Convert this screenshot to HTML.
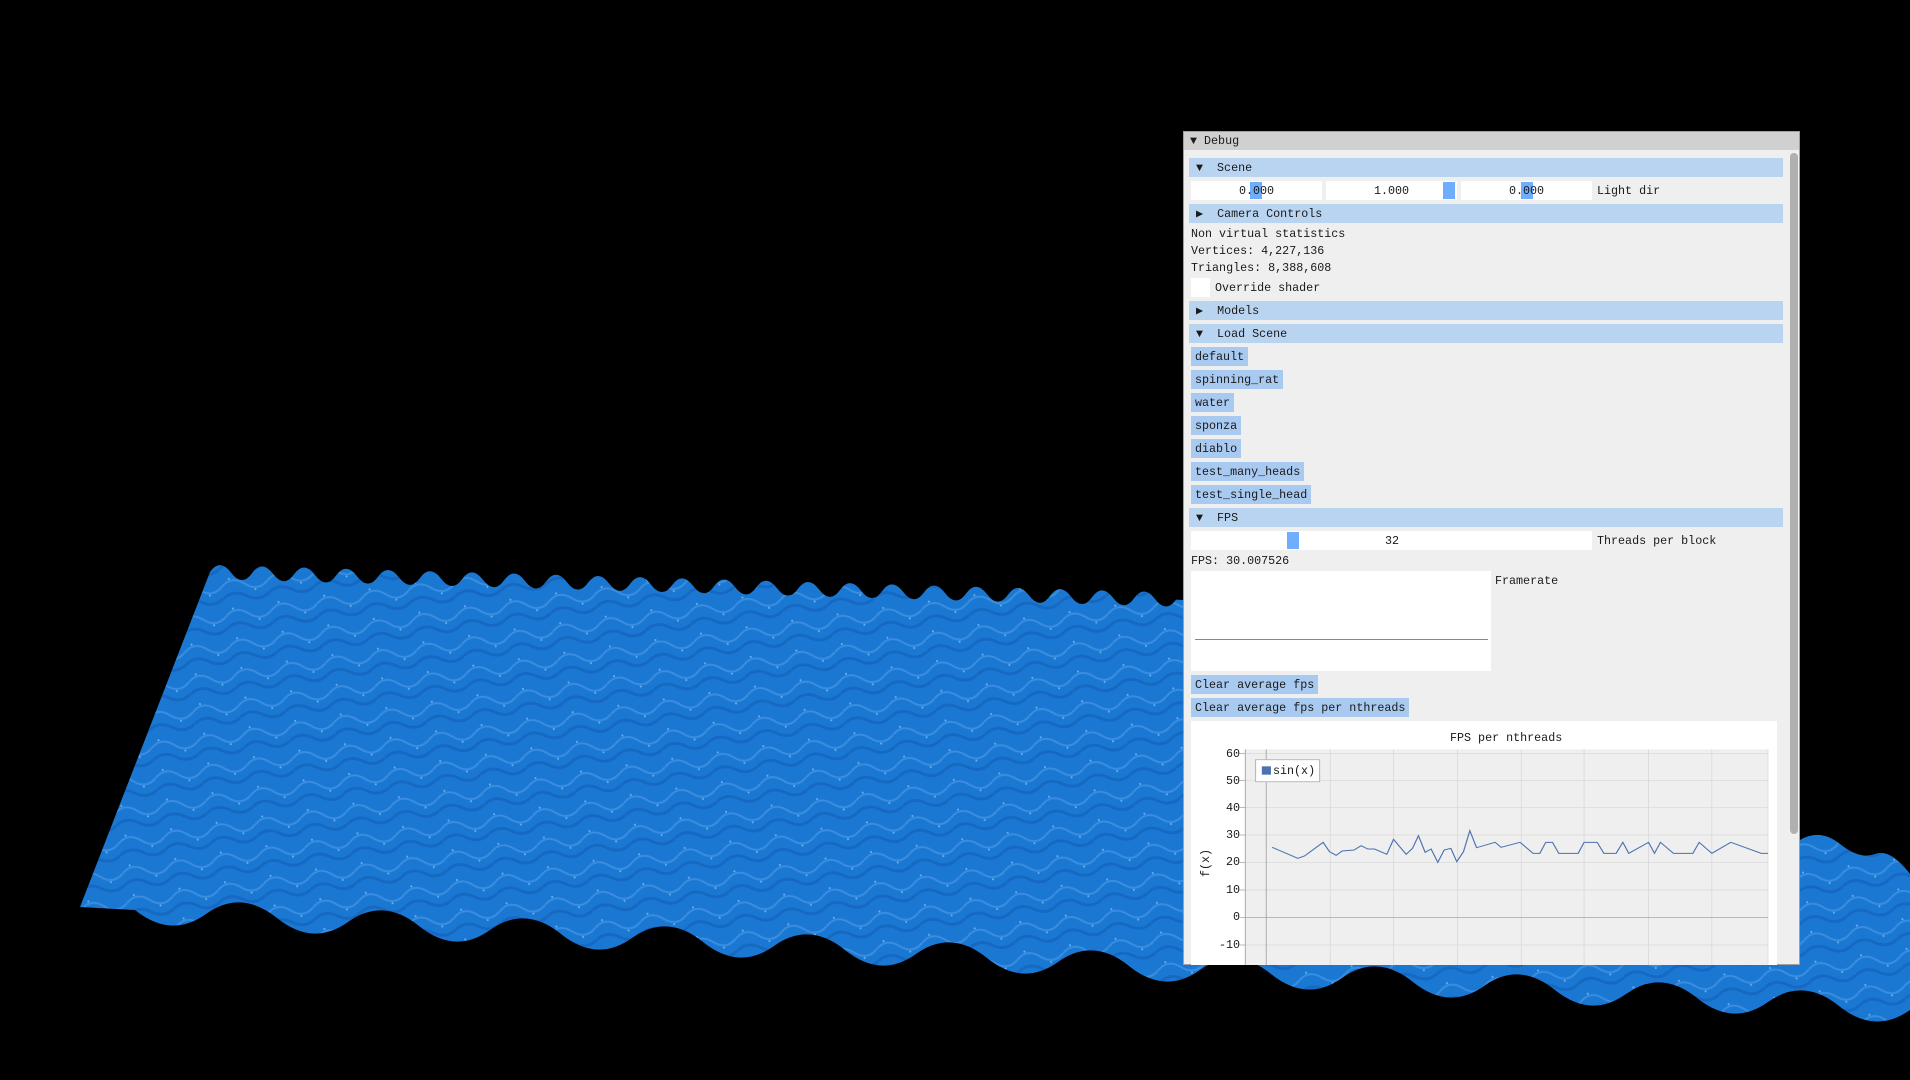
<!DOCTYPE html>
<html><head><meta charset="utf-8"><style>
html,body{margin:0;padding:0;background:#000;width:1910px;height:1080px;overflow:hidden;position:relative}
.t{position:absolute;font-family:"Liberation Mono","DejaVu Sans Mono",monospace;font-size:11.7px;color:#1a1a1a;line-height:19px;white-space:pre;padding-top:1px}
.b{position:absolute}
.hd{position:absolute;left:1189px;width:594px;height:19px;background:#b9d4f1}
.bt{position:absolute;left:1191px;height:19px;background:#a8c9f0}
.fld{position:absolute;height:19px;background:#fff}
.g{position:absolute;background:#6eaefc}
</style></head><body>
<svg class="b" style="left:0;top:0" width="1910" height="1080">
<defs>
<pattern id="w" width="46" height="30" patternUnits="userSpaceOnUse" patternTransform="rotate(-8)">
<rect width="46" height="30" fill="#1b78d2"/>
<path d="M0 12 q11 -10 23 0 t23 0" stroke="#3a8ee0" stroke-width="2" fill="none"/>
<path d="M0 24 q11 -8 23 0 t23 0" stroke="#1669c2" stroke-width="3" fill="none"/>
<circle cx="8" cy="5" r="1" fill="#6fb3f0"/>
<circle cx="33" cy="19" r="1" fill="#6fb3f0"/>
</pattern>
</defs>
<path fill="url(#w)" d="M210 572 q10 -14 21 0.6 t21 0.6 t21 0.6 t21 0.6 t21 0.6 t21 0.6 t21 0.6 t21 0.6 t21 0.6 t21 0.6 t21 0.6 t21 0.6 t21 0.6 t21 0.6 t21 0.6 t21 0.6 t21 0.6 t21 0.6 t21 0.6 t21 0.6 t21 0.6 t21 0.6 t21 0.6 t21 0.6 t21 0.6 t21 0.6 t21 0.6 t21 0.6 t21 0.6 t21 0.6 t21 0.6 t21 0.6 t21 0.6 t21 0.6 t21 0.6 t21 0.6 t21 0.6 t21 0.6 t21 0.6 t21 0.6 t21 0.6 t21 0.6 t21 0.6 t21 0.6 t21 0.6 t21 0.6 L1183 600 L1183 965 L1800 965 L1800 840 q20 -12 40 4 t35 10 t35 20 L1910 1010 q-35 25 -71 -4 t-71 -4 t-71 -4 t-71 -4 t-71 -4 t-71 -4 t-71 -4 t-71 -4 t-71 -4 t-71 -4 t-71 -4 t-71 -4 t-71 -4 t-71 -4 t-71 -4 t-71 -4 t-71 -4 t-71 -4 t-71 -4 t-71 -4 t-71 -4 t-71 -4 t-71 -4 t-71 -4 t-71 -4 L80 907 Z"/>
</svg>

<div class="b" style="left:1183px;top:131px;width:617px;height:834px;background:#efefef;border:1px solid #a0a0a0;box-sizing:border-box"></div>
<div class="b" style="left:1184px;top:132px;width:615px;height:18px;background:#d0d0d0"></div>
<div class="t" style="left:1190px;top:131px">▼ Debug</div>
<div class="b" style="left:1790px;top:153px;width:8px;height:681px;background:#b0b0b0;border-radius:4px"></div>

<div class="hd" style="top:158px"></div><div class="t" style="left:1196px;top:158px">▼  Scene</div>
<div class="fld" style="left:1191px;top:181px;width:131px"></div>
<div class="fld" style="left:1326px;top:181px;width:131px"></div>
<div class="fld" style="left:1461px;top:181px;width:131px"></div>
<div class="g" style="left:1250px;top:182px;width:12px;height:17px"></div>
<div class="g" style="left:1443px;top:182px;width:12px;height:17px"></div>
<div class="g" style="left:1521px;top:182px;width:12px;height:17px"></div>
<div class="t" style="left:1239px;top:181px">0.000</div>
<div class="t" style="left:1374px;top:181px">1.000</div>
<div class="t" style="left:1509px;top:181px">0.000</div>
<div class="t" style="left:1597px;top:181px">Light dir</div>

<div class="hd" style="top:204px"></div><div class="t" style="left:1196px;top:204px">▶  Camera Controls</div>
<div class="t" style="left:1191px;top:224px">Non virtual statistics</div>
<div class="t" style="left:1191px;top:241px">Vertices: 4,227,136</div>
<div class="t" style="left:1191px;top:258px">Triangles: 8,388,608</div>
<div class="fld" style="left:1191px;top:278px;width:19px"></div>
<div class="t" style="left:1215px;top:278px">Override shader</div>

<div class="hd" style="top:301px"></div><div class="t" style="left:1196px;top:301px">▶  Models</div>
<div class="hd" style="top:324px"></div><div class="t" style="left:1196px;top:324px">▼  Load Scene</div>

<div class="bt" style="top:347px;width:57px"></div><div class="t" style="left:1195px;top:347px">default</div>
<div class="bt" style="top:370px;width:92px"></div><div class="t" style="left:1195px;top:370px">spinning_rat</div>
<div class="bt" style="top:393px;width:43px"></div><div class="t" style="left:1195px;top:393px">water</div>
<div class="bt" style="top:416px;width:50px"></div><div class="t" style="left:1195px;top:416px">sponza</div>
<div class="bt" style="top:439px;width:50px"></div><div class="t" style="left:1195px;top:439px">diablo</div>
<div class="bt" style="top:462px;width:113px"></div><div class="t" style="left:1195px;top:462px">test_many_heads</div>
<div class="bt" style="top:485px;width:120px"></div><div class="t" style="left:1195px;top:485px">test_single_head</div>

<div class="hd" style="top:508px"></div><div class="t" style="left:1196px;top:508px">▼  FPS</div>
<div class="fld" style="left:1191px;top:531px;width:401px"></div>
<div class="g" style="left:1287px;top:532px;width:12px;height:17px"></div>
<div class="t" style="left:1385px;top:531px">32</div>
<div class="t" style="left:1597px;top:531px">Threads per block</div>
<div class="t" style="left:1191px;top:551px">FPS: 30.007526</div>
<div class="fld" style="left:1191px;top:571px;width:300px;height:100px"></div>
<div class="b" style="left:1195px;top:639px;width:293px;height:1px;background:#888"></div>
<div class="t" style="left:1495px;top:571px">Framerate</div>
<div class="bt" style="top:675px;width:127px"></div><div class="t" style="left:1195px;top:675px">Clear average fps</div>
<div class="bt" style="top:698px;width:218px"></div><div class="t" style="left:1195px;top:698px">Clear average fps per nthreads</div>

<div class="fld" style="left:1191px;top:721px;width:586px;height:244px"></div>
<div class="t" style="left:1450px;top:728px">FPS per nthreads</div>
<svg class="b" style="left:1180px;top:500px" width="620" height="465" viewBox="0 0 1568 1395" preserveAspectRatio="none">
<rect x="165" y="748" width="1322" height="647" fill="#efefef"/>
<g stroke="#d8d8d8" stroke-width="2">
<line x1="380" y1="748" x2="380" y2="1395"/><line x1="540" y1="748" x2="540" y2="1395"/><line x1="702" y1="748" x2="702" y2="1395"/><line x1="863" y1="748" x2="863" y2="1395"/><line x1="1022" y1="748" x2="1022" y2="1395"/><line x1="1185" y1="748" x2="1185" y2="1395"/><line x1="1345" y1="748" x2="1345" y2="1395"/><line x1="1487" y1="748" x2="1487" y2="1395"/>
<line x1="165" y1="760" x2="1487" y2="760"/><line x1="165" y1="841" x2="1487" y2="841"/><line x1="165" y1="922" x2="1487" y2="922"/><line x1="165" y1="1005" x2="1487" y2="1005"/><line x1="165" y1="1087" x2="1487" y2="1087"/><line x1="165" y1="1170" x2="1487" y2="1170"/><line x1="165" y1="1335" x2="1487" y2="1335"/>
</g>
<line x1="218" y1="748" x2="218" y2="1395" stroke="#999" stroke-width="2"/>
<line x1="165" y1="1252" x2="1487" y2="1252" stroke="#999" stroke-width="2"/>
<line x1="165" y1="748" x2="165" y2="1395" stroke="#999" stroke-width="2"/>
<g stroke="#999" stroke-width="2"><line x1="150" y1="760" x2="165" y2="760"/><line x1="150" y1="841" x2="165" y2="841"/><line x1="150" y1="922" x2="165" y2="922"/><line x1="150" y1="1005" x2="165" y2="1005"/><line x1="150" y1="1087" x2="165" y2="1087"/><line x1="150" y1="1170" x2="165" y2="1170"/><line x1="150" y1="1252" x2="165" y2="1252"/><line x1="150" y1="1335" x2="165" y2="1335"/></g>
<polyline fill="none" stroke="#4c72b0" stroke-width="3" points="233,1042 298,1075 315,1068 362,1027 378,1055 395,1066 410,1053 440,1050 458,1037 475,1047 492,1047 523,1063 540,1018 572,1063 588,1045 603,1007 620,1057 635,1047 652,1087 668,1050 685,1045 700,1085 717,1055 733,992 750,1043 797,1027 812,1042 860,1027 893,1060 910,1060 925,1027 942,1027 958,1060 1007,1060 1022,1027 1055,1027 1072,1060 1103,1060 1120,1027 1135,1060 1185,1027 1200,1060 1215,1027 1248,1060 1297,1060 1313,1027 1345,1060 1393,1027 1470,1060 1487,1060"/>
<rect x="191" y="779" width="162" height="66" fill="#fff" stroke="#bbb" stroke-width="3"/>
<rect x="207" y="799" width="23" height="25" fill="#4c72b0"/>
</svg>
<div class="t" style="left:1273px;top:761px">sin(x)</div>
<div class="t" style="left:1226px;top:744px">60</div>
<div class="t" style="left:1226px;top:771px">50</div>
<div class="t" style="left:1226px;top:798px">40</div>
<div class="t" style="left:1226px;top:825px">30</div>
<div class="t" style="left:1226px;top:852px">20</div>
<div class="t" style="left:1226px;top:880px">10</div>
<div class="t" style="left:1233px;top:907px">0</div>
<div class="t" style="left:1219px;top:935px">-10</div>
<div class="t" style="left:1196px;top:877px;transform:rotate(-90deg);transform-origin:left top">f(x)</div>
</body></html>
